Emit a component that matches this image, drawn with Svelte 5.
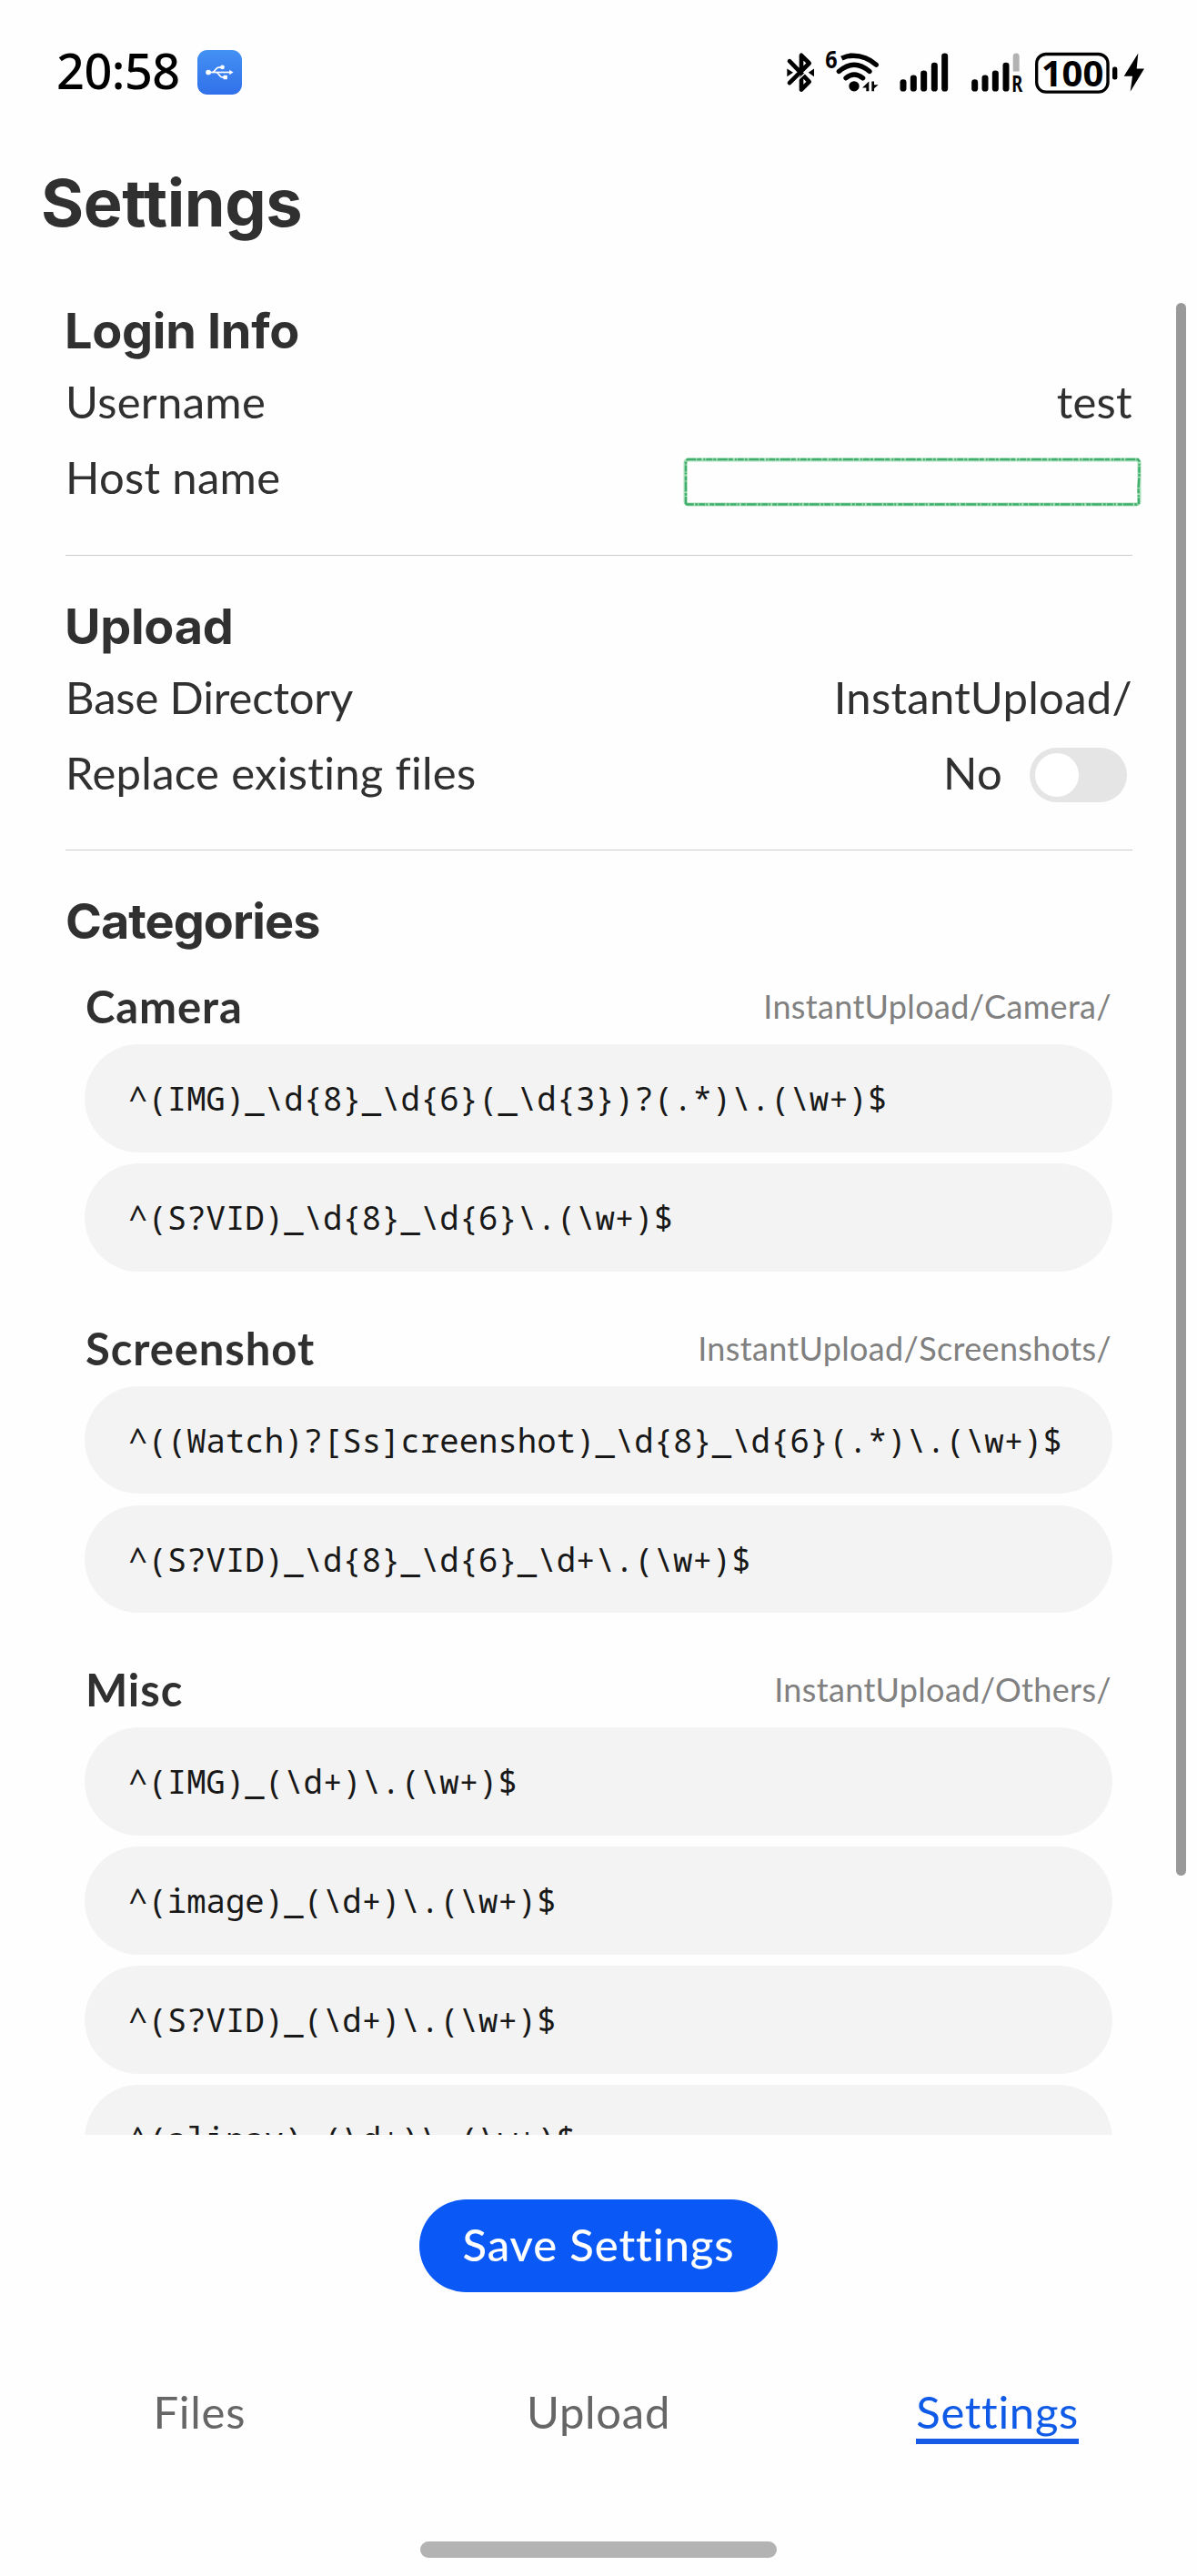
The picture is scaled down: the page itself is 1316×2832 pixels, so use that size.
<script>
  const categories = [
    {
      name: 'Camera',
      path: 'InstantUpload/Camera/',
      patterns: ['^(IMG)_\\d{8}_\\d{6}(_\\d{3})?(.*)\\.(\\w+)$', '^(S?VID)_\\d{8}_\\d{6}\\.(\\w+)$']
    },
    {
      name: 'Screenshot',
      path: 'InstantUpload/Screenshots/',
      patterns: [
        '^((Watch)?[Ss]creenshot)_\\d{8}_\\d{6}(.*)\\.(\\w+)$',
        '^(S?VID)_\\d{8}_\\d{6}_\\d+\\.(\\w+)$'
      ]
    },
    {
      name: 'Misc',
      path: 'InstantUpload/Others/',
      patterns: [
        '^(IMG)_(\\d+)\\.(\\w+)$',
        '^(image)_(\\d+)\\.(\\w+)$',
        '^(S?VID)_(\\d+)\\.(\\w+)$',
        '^(alipay)_(\\d+)\\.(\\w+)$'
      ]
    }
  ];

  const tabs = ['Files', 'Upload', 'Settings'];
  let activeTab = $state('Settings');
  let replaceExisting = $state(false);

  const bars = [
    { x: 0, top: 170 },
    { x: 34, top: 156 },
    { x: 68, top: 141 },
    { x: 103, top: 115 }
  ];
</script>

<div class="screen">
  <header class="status">
    <span class="clock">20:58</span>
    <svg class="usb" viewBox="652 165 146 146" aria-label="USB">
      <defs>
        <linearGradient id="usb-bg" x1="0" y1="0" x2="0" y2="1">
          <stop offset="0" stop-color="#4391f3" />
          <stop offset="1" stop-color="#3170ea" />
        </linearGradient>
      </defs>
      <rect x="652" y="165" width="146" height="146" rx="33" fill="url(#usb-bg)" />
      <g fill="none" stroke="#fff" stroke-width="5">
        <path d="M688 238H760" />
        <path d="M702 238C710 236 712 222 722 222H733" />
        <path d="M714 238C723 240 724 254 733 254H742" />
      </g>
      <g fill="#fff">
        <circle cx="688" cy="238" r="8.5" />
        <circle cx="734" cy="221.500" r="7" />
        <rect x="737" y="248" width="13" height="13" rx="2" />
        <path d="M757 230L770 238L757 246Z" />
      </g>
    </svg>

    <div class="indicators">
      <svg class="bt" viewBox="72 67.5 96 162" aria-label="Bluetooth">
        <g fill="none" stroke="#000" stroke-width="14" stroke-linejoin="round" stroke-linecap="round">
          <path d="M84 182L149 117L123 91V143M84 110L119 146" />
          <path d="M126 154L149 178L123 204V166" />
        </g>
        <path d="M76 135L96 148L76 161ZM165 135L146 148L165 161Z" />
        <path d="M112 172L136 149" stroke="#fefefe" stroke-width="4" />
      </svg>
      <svg class="wifi" viewBox="198 67.5 186 162" aria-label="Wi-Fi 6">
        <text x="202" y="134" class="wifi-gen" textLength="40" lengthAdjust="spacingAndGlyphs">6</text>
        <g fill="none" stroke="#000" stroke-width="16" stroke-linecap="round">
          <path d="M270 166Q297 143 326 166" />
          <path d="M247 144Q297 100 348 144" />
          <path d="M282 93Q331 88 370 122" />
          <path d="M256 101Q272 93 290 92" stroke-linecap="butt" />
        </g>
        <circle cx="297" cy="193" r="17" />
        <path d="M346 177V209H337V198H324ZM355 177H363V188H377L363 200V209H355Z" />
      </svg>
      <svg class="signal" viewBox="444 67.5 168 162" aria-label="Signal 1">
        {#each bars as b}
          <rect x={448.5 + b.x} y={b.top} width="21" height={210 - b.top} rx="10" />
        {/each}
        <rect x="585.500" y="84" width="21" height="126" rx="10" />
      </svg>
      <svg class="signal-r" viewBox="682 67.5 176 162" aria-label="Signal 2, roaming">
        {#each bars as b}
          <rect x={685.5 + b.x} y={b.top} width="21" height={210 - b.top} rx="10" />
        {/each}
        <path d="M822 144V94.500A10.500 10.500 0 0 1 843 94.500V144Z" fill="#b2b2b2" />
        <text x="818" y="210" class="roam" textLength="36" lengthAdjust="spacingAndGlyphs">R</text>
      </svg>
      <svg class="battery" viewBox="892 67.5 368 162" aria-label="Battery">
        <rect x="900" y="87" width="235" height="125" rx="31" fill="none" stroke="#000" stroke-width="10" />
        <text x="1018" y="194" class="level" textLength="206" lengthAdjust="spacingAndGlyphs">100</text>
        <rect x="1150" y="129" width="16" height="42" rx="7" />
        <path d="M1235 84L1188 160H1216L1209 211L1255 135H1230Z" />
      </svg>
    </div>
  </header>

  <h1>Settings</h1>

  <main>
    <section class="first">
      <h2>Login Info</h2>
      <div class="row"><span>Username</span><span>test</span></div>
      <div class="row">
        <span>Host name</span>
        <svg class="host" viewBox="0 0 504 54" aria-label="Hidden host name">
          <rect class="wash" x="2.500" y="2.500" width="499" height="49" rx="3" />
          <path class="pen" d="M3 50V4.500L5 2H500L501.500 4V20L500.500 34L501 50L499 51.500H4Z" />
        </svg>
      </div>
    </section>

    <section class="second">
      <h2>Upload</h2>
      <div class="row"><span class="tight">Base Directory</span><span>InstantUpload/</span></div>
      <div class="row">
        <span>Replace existing files</span>
        <div class="choice">
          <span class="state">{replaceExisting ? 'Yes' : 'No'}</span>
          <button
            class="toggle"
            class:on={replaceExisting}
            aria-label="Replace existing files"
            onclick={() => (replaceExisting = !replaceExisting)}
          ><i></i></button>
        </div>
      </div>
    </section>

    <section class="categories">
      <h2 class="tight">Categories</h2>
      {#each categories as cat}
        <div class="category">
          <div class="cat-head"><h3>{cat.name}</h3><span class="path">{cat.path}</span></div>
          <div class="patterns">
            {#each cat.patterns as p}
              <div class="pattern">{p}</div>
            {/each}
          </div>
        </div>
      {/each}
    </section>

    <div class="scrollbar"></div>
  </main>

  <div class="actions"><button class="save">Save Settings</button></div>

  <nav>
    {#each tabs as tab}
      <button class="tab" class:active={tab === activeTab} onclick={() => (activeTab = tab)}>
        <span>{tab}</span>
      </button>
    {/each}
  </nav>
  <div class="home-bar"></div>
</div>

<style>
  :global(body) {
    background: #fefefe;
  }
  .screen {
    display: flex;
    flex-direction: column;
    width: 1316px;
    height: 2832px;
    overflow: hidden;
    background: #fefefe;
    color: #303030;
    font-family: Lato, 'Open Sans', sans-serif;
    font-size: 49px;
    letter-spacing: 0.3px;
  }
  button {
    border: 0;
    padding: 0;
    background: none;
    font: inherit;
    letter-spacing: inherit;
  }
  h1,
  h2,
  h3 {
    margin: 0;
    font-weight: 700;
  }

  .status {
    display: flex;
    align-items: center;
    flex: none;
    height: 159px;
    padding: 0 56px 0 62px;
    color: #000;
  }
  .clock {
    padding-bottom: 5px;
    font: 500 54px 'Noto Sans', sans-serif;
    letter-spacing: -0.5px;
  }
  .usb {
    width: 49px;
    height: 49px;
    margin-left: 19px;
  }
  .indicators {
    display: flex;
    align-items: center;
    margin-left: auto;
  }
  .indicators svg {
    height: 54px;
    overflow: visible;
  }
  .bt {
    width: 32px;
    margin-right: 10px;
  }
  .wifi {
    width: 62px;
    margin-right: 20px;
  }
  .signal {
    width: 56px;
    margin-right: 23.3px;
  }
  .signal-r {
    width: 58.7px;
    margin-right: 11.3px;
  }
  .battery {
    width: 122.7px;
  }
  .wifi-gen,
  .roam,
  .level {
    font-family: 'Noto Sans', sans-serif;
    font-weight: 700;
    letter-spacing: 0;
  }
  .wifi-gen {
    font-size: 82px;
  }
  .roam {
    font-size: 73px;
  }
  .level {
    font-size: 118px;
    text-anchor: middle;
  }

  h1 {
    flex: none;
    height: 122px;
    margin: 1px 0 51px;
    padding-left: 45px;
    font-family: Inter, sans-serif;
    font-size: 72px;
    font-weight: 650;
    line-height: 126px;
    letter-spacing: -0.4px;
  }

  main {
    position: relative;
    flex: none;
    height: 2014px;
    overflow: hidden;
    padding: 0 71px 0 72px;
    box-sizing: border-box;
  }
  h2 {
    height: 58px;
    margin-left: -1px;
    font-family: Inter, sans-serif;
    font-size: 54px;
    font-weight: 650;
    line-height: 62px;
    letter-spacing: -0.3px;
  }
  h2.tight {
    letter-spacing: -1px;
  }
  .first,
  .second {
    border-bottom: 1px solid #cbcbcb;
  }
  .first {
    padding-bottom: 45px;
  }
  .second {
    padding: 47px 0 44px;
  }
  .categories {
    padding: 47px 22px 0 21px;
  }
  .first h2,
  .second h2 {
    margin-bottom: 8px;
  }
  .categories h2 {
    margin: 0 0 22px -21px;
  }
  .row {
    display: flex;
    align-items: center;
    justify-content: space-between;
    height: 83px;
    padding-top: 1px;
    box-sizing: border-box;
  }
  .row .tight {
    letter-spacing: -0.15px;
  }
  .host {
    width: 504px;
    height: 54px;
    margin: 12px -10px 0 0;
    fill: none;
  }
  .wash {
    stroke: #a9dfbb;
    stroke-width: 4;
  }
  .pen {
    stroke: #3fae6b;
    stroke-width: 2.4;
    stroke-dasharray: 7 1 3 1.500 11 1 5 2 2 1;
  }
  .choice {
    display: flex;
    align-items: center;
  }
  .toggle {
    width: 107px;
    height: 60px;
    margin: 5px 6px 0 30px;
    padding: 6px;
    box-sizing: border-box;
    border-radius: 30px;
    background: #e5e5e5;
  }
  .toggle i {
    display: block;
    width: 48px;
    height: 48px;
    border-radius: 50%;
    background: #fff;
  }
  .toggle.on {
    background: #0a59f7;
  }
  .toggle.on i {
    margin-left: auto;
  }

  .category {
    margin-bottom: 39.75px;
  }
  .cat-head {
    display: flex;
    align-items: center;
    justify-content: space-between;
    height: 86px;
    padding: 2px 1px 0 1px;
    box-sizing: border-box;
  }
  h3 {
    font-size: 49px;
    letter-spacing: 0.9px;
  }
  .path {
    color: #808080;
    font-size: 36px;
    letter-spacing: 0.35px;
  }
  .patterns {
    display: flex;
    flex-direction: column;
    gap: 12.25px;
  }
  .pattern {
    height: 118.75px;
    padding-left: 48px;
    border-radius: 60px;
    background: #f3f3f3;
    color: #181818;
    font: 35.67px/118.75px 'Noto Sans Mono', 'DejaVu Sans Mono', monospace;
    letter-spacing: 0;
    white-space: pre;
  }
  .scrollbar {
    position: absolute;
    top: 0;
    right: 12px;
    width: 11.5px;
    height: 1729px;
    border-radius: 6px;
    background: #999;
  }

  .actions {
    display: flex;
    flex: none;
    justify-content: center;
    padding-top: 71px;
  }
  .save {
    width: 394px;
    height: 102px;
    padding-bottom: 4px;
    box-sizing: border-box;
    border-radius: 51px;
    background: #0a59f7;
    color: #fff;
    font-weight: 500;
    letter-spacing: 0.9px;
  }

  nav {
    display: grid;
    flex: none;
    grid-template-columns: repeat(3, 1fr);
    height: 167px;
    margin-top: 100px;
  }
  .tab {
    display: flex;
    align-items: flex-start;
    justify-content: center;
    color: #666;
  }
  .tab span {
    height: 61px;
    line-height: 62px;
    letter-spacing: 0.7px;
  }
  .tab.active {
    color: #0f5ae6;
  }
  .tab.active span {
    border-bottom: 6px solid #155be8;
  }
  .home-bar {
    flex: none;
    align-self: center;
    width: 392px;
    height: 18px;
    margin-top: 7px;
    border-radius: 9px;
    background: #b3b3b3;
  }
</style>
